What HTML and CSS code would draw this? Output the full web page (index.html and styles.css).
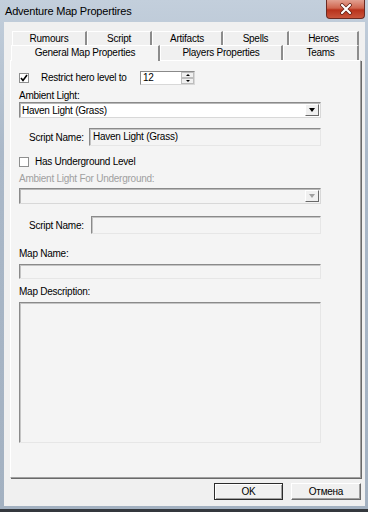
FILE: index.html
```html
<!DOCTYPE html>
<html lang="en">
<head>
  <meta charset="UTF-8">
  <title>Adventure Map Propertires</title>
  <link rel="stylesheet" href="styles.css">
</head>
<body>

  <div class="window">
    <div class="titlebar">
      <span class="title">Adventure Map Propertires</span>
      <div class="close">
        <svg width="14" height="12" viewBox="0 0 14 12">
          <path d="M3 2 L11 10 M11 2 L3 10" stroke="#5a1a10" stroke-width="3.6" stroke-linecap="round"/>
          <path d="M3 2 L11 10 M11 2 L3 10" stroke="#fff" stroke-width="2.2" stroke-linecap="round"/>
        </svg>
      </div>
    </div>

    <div class="client">
      <div class="tabs">
        <div class="tabrow back">
          <div class="tab w-rumours">Rumours</div>
          <div class="tab w-script">Script</div>
          <div class="tab w-artifacts">Artifacts</div>
          <div class="tab w-spells">Spells</div>
          <div class="tab w-heroes">Heroes</div>
        </div>
        <div class="tabrow front">
          <div class="tab w-general selected">General Map Properties</div>
          <div class="tab w-players">Players Properties</div>
          <div class="tab w-teams">Teams</div>
        </div>
      </div>

      <div class="panel">
        <div class="row hero-row">
          <span class="check checked">
            <svg width="8" height="8" viewBox="0 0 8 8"><path d="M1 4 L3 6.5 L7 1" stroke="#000" stroke-width="1.6" fill="none"/></svg>
          </span>
          <span class="check-label wide">Restrict hero level to</span>
          <div class="spin">
            <span class="spin-value">12</span>
            <div class="spin-buttons">
              <span class="spin-btn"><i class="tri-up"></i></span>
              <span class="spin-btn"><i class="tri-down"></i></span>
            </div>
          </div>
        </div>

        <div class="label ambient-label">Ambient Light:</div>
        <div class="combo">
          <span class="combo-value">Haven Light (Grass)</span>
          <span class="combo-btn"><i class="arrow"></i></span>
        </div>

        <div class="row script-row">
          <span class="script-label">Script Name:</span>
          <div class="field script-field">Haven Light (Grass)</div>
        </div>

        <div class="row under-row">
          <span class="check"></span>
          <span class="check-label">Has Underground Level</span>
        </div>

        <div class="label disabled under-label">Ambient Light For Underground:</div>
        <div class="combo combo-disabled">
          <span class="combo-value"></span>
          <span class="combo-btn"><i class="arrow"></i></span>
        </div>

        <div class="row script-row second">
          <span class="script-label">Script Name:</span>
          <div class="field script-field"></div>
        </div>

        <div class="label mapname-label">Map Name:</div>
        <div class="field mapname-field"></div>

        <div class="label desc-label">Map Description:</div>
        <div class="field desc-field"></div>
      </div>

      <div class="buttons">
        <button class="btn default">OK</button>
        <button class="btn">Отмена</button>
      </div>
    </div>
  </div>

</body>
</html>
```

FILE: styles.css
```css
body {
  margin: 0;
  background: #34383d;
  font-family: "Liberation Sans", Arial, sans-serif;
  font-size: 10px;
  letter-spacing: -0.25px;
  color: #000;
}
.window {
  width: 368px;
  height: 509px;
  box-sizing: border-box;
  padding: 0 3px 3px 4px;
  display: flex;
  flex-direction: column;
  background: linear-gradient(to bottom, #c3cfdc, #aab8c8 30%, #a3b1c1);
}
.titlebar {
  height: 22px;
  display: flex;
  align-items: flex-start;
}
.title {
  font-size: 11px;
  letter-spacing: -0.2px;
  margin: 5px 0 0 1px;
  color: #000;
}
.close {
  margin-left: auto;
  width: 39px;
  height: 19px;
  box-sizing: border-box;
  border: 1px solid #6b2a22;
  border-top: none;
  border-radius: 0 0 4px 4px;
  background: linear-gradient(to bottom, #e2a090, #d0664f 45%, #b8321c 55%, #c9553c);
  display: flex;
  align-items: center;
  justify-content: center;
}
.client {
  flex: 1;
  background: #f0f0f0;
  padding: 9px 5px 0 6px;
  display: flex;
  flex-direction: column;
}

/* tabs */
.tabs {
  margin-left: 1px;
}
.tabrow {
  display: flex;
}
.tabrow.back {
  height: 14px;
  margin-left: 1px;
}
.tabrow.front {
  height: 15px;
}
.tab {
  box-sizing: border-box;
  text-align: center;
  border-left: 1px solid #fff;
  border-top: 1px solid #fff;
  border-right: 2px solid #8c8c8c;
  background: #f0f0f0;
  line-height: 13px;
}
.tabrow.front .tab {
  line-height: 14px;
  position: relative;
}
.tabrow.front .tab.selected {
  background: #f4f4f4;
  z-index: 1;
  margin-bottom: -1px;
}
.w-rumours { width: 75px; }
.w-script { width: 65px; }
.w-artifacts { width: 71px; }
.w-spells { width: 66px; }
.w-heroes { width: 70px; }
.w-general { width: 149px; }
.w-players { width: 123px; }
.w-teams { width: 76px; }

.panel {
  height: 418px;
  box-sizing: border-box;
  width: 351px;
  background: #f4f4f4;
  border-top: 1px solid #fff;
  border-left: 1px solid #fff;
  border-right: 1px solid #a0a0a0;
  border-bottom: 1px solid #a0a0a0;
  box-shadow: 1px 1px 0 #696969;
  padding: 0 0 0 8px;
  display: flex;
  flex-direction: column;
}
.row {
  display: flex;
  align-items: center;
}
.label {
  line-height: 13px;
}
.label.disabled {
  color: #a0a0a0;
}

/* checkbox */
.check {
  width: 10px;
  height: 10px;
  box-sizing: border-box;
  border: 1px solid #8e8f8f;
  background: #fff;
  display: flex;
  align-items: center;
  justify-content: center;
}
.check-label {
  margin-left: 6px;
}
.check-label.wide {
  margin-left: 12px;
  width: 99px;
}
.hero-row {
  margin-top: 10px;
  height: 13px;
}

/* spin box */
.spin {
  width: 55px;
  height: 14px;
  box-sizing: border-box;
  border: 1px solid #8a8a8a;
  border-right-color: #d8d8d8;
  border-bottom-color: #d8d8d8;
  background: #fff;
  display: flex;
}
.spin-value {
  flex: 1;
  padding-left: 2px;
  line-height: 12px;
}
.spin-buttons {
  width: 13px;
  display: flex;
  flex-direction: column;
}
.spin-btn {
  flex: 1;
  background: #f0f0f0;
  border: 1px solid #bdbdbd;
  display: flex;
  align-items: center;
  justify-content: center;
}
.tri-up, .tri-down {
  width: 0;
  height: 0;
  border-left: 2px solid transparent;
  border-right: 2px solid transparent;
}
.tri-up { border-bottom: 2px solid #000; }
.tri-down { border-top: 2px solid #000; }

/* combo */
.ambient-label { margin-top: 5px; }
.combo {
  width: 302px;
  height: 16px;
  box-sizing: border-box;
  border: 1px solid #8a8a8a;
  border-right-color: #d8d8d8;
  border-bottom-color: #d8d8d8;
  box-shadow: inset 1px 1px 0 #b8b8b8;
  background: #fff;
  display: flex;
  align-items: center;
}
.combo-value {
  flex: 1;
  padding-left: 2px;
}
.combo-btn {
  width: 14px;
  height: 12px;
  margin-right: 1px;
  box-sizing: border-box;
  border: 1px solid #fff;
  border-right-color: #696969;
  border-bottom-color: #696969;
  background: #f0f0f0;
  display: flex;
  align-items: center;
  justify-content: center;
}
.arrow {
  width: 0;
  height: 0;
  border-left: 3.5px solid transparent;
  border-right: 3.5px solid transparent;
  border-top: 4px solid #000;
}
.combo-disabled {
  background: #f4f4f4;
}
.combo-disabled .arrow {
  border-top-color: #a0a0a0;
}

/* text fields */
.field {
  box-sizing: border-box;
  border: 1px solid #8a8a8a;
  border-right-color: #e6e6e6;
  border-bottom-color: #e6e6e6;
  box-shadow: inset 1px 1px 0 #c4c4c4;
  background: #f4f4f4;
}
.script-row {
  margin-top: 10px;
  height: 18px;
}
.script-row.second {
  margin-top: 12px;
}
.script-label {
  margin-left: 10px;
  width: 60px;
}
.script-field {
  height: 18px;
  width: 232px;
  padding: 1px 0 0 3px;
  line-height: 13px;
}
.script-row.second .script-field {
  width: 230px;
  margin-left: 2px;
}
.under-row {
  margin-top: 9px;
  height: 13px;
}
.under-label { margin-top: 4px; }
.combo-disabled { margin-top: 3px; }
.mapname-label { margin-top: 13px; }
.mapname-field {
  margin-top: 4px;
  width: 302px;
  height: 15px;
}
.desc-label { margin-top: 6px; }
.desc-field {
  margin-top: 4px;
  width: 302px;
  height: 141px;
}

/* buttons */
.buttons {
  display: flex;
  justify-content: flex-end;
  gap: 8px;
  margin-top: 5px;
  width: 351px;
}
.btn {
  width: 70px;
  height: 17px;
  box-sizing: border-box;
  padding: 0;
  font-family: inherit;
  font-size: 10px;
  letter-spacing: -0.25px;
  color: #000;
  background: #f0f0f0;
  border: 1px solid #fff;
  border-right-color: #696969;
  border-bottom-color: #696969;
  box-shadow: inset -1px -1px 0 #a0a0a0;
}
.btn.default {
  width: 69px;
  border-color: #2b2b2b;
  box-shadow: inset 1px 1px 0 #fff, inset -1px -1px 0 #a0a0a0;
}
```
